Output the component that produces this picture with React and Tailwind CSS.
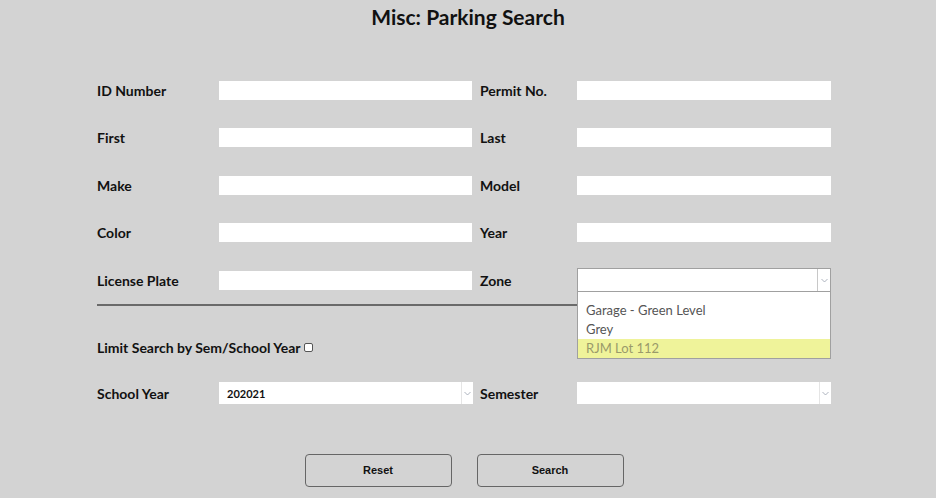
import { useState } from "react";

const Chevron = () => (
  <svg width="7" height="5" viewBox="0 0 7 5" className="text-gray-400">
    <path d="M0.5 1 L3.5 4 L6.5 1" fill="none" stroke="currentColor" strokeWidth="0.8" />
  </svg>
);

const Label = ({ children }) => (
  <div className="w-[122px] shrink-0 text-[14px] font-bold leading-[19px] text-[#111]">{children}</div>
);

const RightLabel = ({ children }) => (
  <div className="w-[105px] shrink-0 pl-[8px] text-[14px] font-bold leading-[19px] text-[#111]">{children}</div>
);

const TextBox = ({ w = "w-[253px]" }) => <div className={`h-[19px] ${w} shrink-0 bg-white`} />;

const SelectBox = ({ value }) => (
  <div className="flex h-[22px] w-[254px] shrink-0 items-center bg-white">
    <div className="flex-1 pl-[8px] pt-[2px] text-[11px] font-bold text-[#111]">{value}</div>
    <div className="flex h-full w-[12px] items-center justify-center border-l border-[#e5e5e5]">
      <Chevron />
    </div>
  </div>
);

const rows = [
  ["ID Number", "Permit No."],
  ["First", "Last"],
  ["Make", "Model"],
  ["Color", "Year"],
];

export default function App() {
  const [limit, setLimit] = useState(false);

  return (
    <div className="h-[498px] w-[936px] bg-[#d3d3d3] font-['Lato',sans-serif]">
      <h1 className="pt-[1px] text-center text-[21px] font-bold text-[#111]">Misc: Parking Search</h1>

      <div className="ml-[97px] mt-[48px] w-[734px]">
        {rows.map(([l, r], i) => (
          <div key={l} className={`flex items-center ${i === 3 ? "mb-[26px]" : "mb-[28.5px]"}`}>
            <Label>{l}</Label>
            <TextBox />
            <RightLabel>{r}</RightLabel>
            <TextBox w="w-[254px]" />
          </div>
        ))}

        <div className="flex items-center">
          <Label>License Plate</Label>
          <TextBox />
          <RightLabel>Zone</RightLabel>
          <div className="relative">
            <div className="flex h-[24px] w-[254px] items-center border border-[#a0a0a0] bg-white">
              <div className="flex-1" />
              <div className="flex h-full w-[13px] items-center justify-center border-l border-[#c8c8c8]">
                <Chevron />
              </div>
            </div>
            <div className="absolute left-0 top-[24px] z-10 w-[254px] border border-t-0 border-[#a0a0a0] bg-white pt-[9px] text-[13px] leading-[19px] text-[#555]">
              <div className="pl-[8px]">Garage - Green Level</div>
              <div className="pl-[8px]">Grey</div>
              <div className="bg-[#eff39a] pl-[8px] text-[#9a9a6a]">RJM Lot 112</div>
            </div>
          </div>
        </div>

        <div className="mt-[12px] h-[2px] w-[734px] bg-[#6a6a6a]" />

        <div className="mt-[32px] flex items-center text-[14px] font-bold leading-[19px] text-[#111]">
          Limit Search by Sem/School Year
          <input
            type="checkbox"
            checked={limit}
            onChange={(e) => setLimit(e.target.checked)}
            className="ml-[3px] h-[9px] w-[9px] appearance-none rounded-[2px] border border-[#555] bg-white"
          />
        </div>

        <div className="mt-[25px] flex items-center">
          <Label>School Year</Label>
          <div className="w-[253px] shrink-0">
            <SelectBox value="202021" />
          </div>
          <RightLabel>Semester</RightLabel>
          <SelectBox value="" />
        </div>
      </div>

      <div className="mt-[50px] flex justify-center gap-[25px] pr-[8px] font-['Liberation_Sans',sans-serif]">
        <button className="h-[33px] w-[147px] rounded-[4px] border border-[#666] text-[11px] font-bold text-[#111]">
          Reset
        </button>
        <button className="h-[33px] w-[147px] rounded-[4px] border border-[#666] text-[11px] font-bold text-[#111]">
          Search
        </button>
      </div>
    </div>
  );
}
